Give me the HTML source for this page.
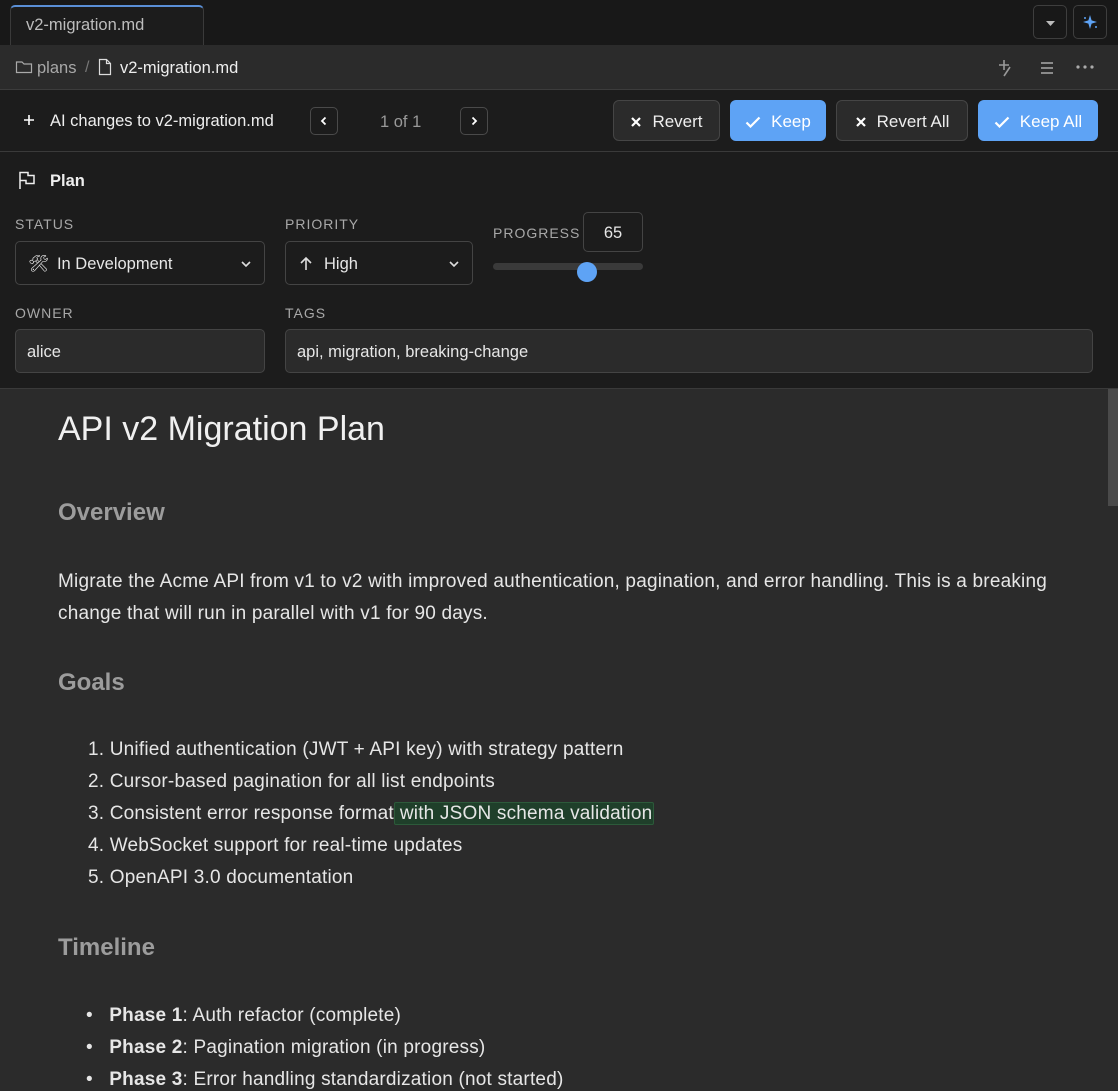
<!DOCTYPE html>
<html><head><meta charset="utf-8"><style>
*{box-sizing:border-box;margin:0;padding:0}
body{width:1118px;height:1080px;overflow:hidden;background:#2b2b2b;font-family:"Liberation Sans",sans-serif;color:#e6e6e6;position:relative}
.abs{position:absolute}
.tabbar{left:0;top:0;width:1118px;height:45px;background:#181818}
.tab{left:10px;top:5px;width:194px;height:40px;border:1px solid #3a3a3a;border-bottom:none;border-top:2px solid #5a8fd6;border-radius:5px 5px 0 0;background:#1c1c1c;color:#bdbdbd;font-size:16.5px;padding:9px 0 0 15px}
.sq{width:34px;height:34px;border:1px solid #3e3e3e;border-radius:5px;top:5px}
.crumb{left:0;top:45px;width:1118px;height:45px;background:#2b2b2b;border-bottom:1px solid #3c3c3c}
.aibar{left:0;top:90px;width:1118px;height:62px;background:#1c1c1c;border-bottom:1px solid #3a3a3a}
.btn{top:100px;height:41px;border-radius:6px;font-size:17px;display:flex;align-items:center;justify-content:center;gap:10px;padding-top:2px}
.dk{background:#2b2b2b;border:1px solid #454545;color:#eee}
.bl{background:#5ea3f5;color:#fff}
.nav{top:107px;width:28px;height:28px;border:1px solid #4a4a4a;border-radius:5px;display:flex;align-items:center;justify-content:center}
.plan{left:0;top:152px;width:1118px;height:237px;background:#1c1c1c;border-bottom:1px solid #3a3a3a}
.lbl{font-size:14px;color:#a8a8a8;letter-spacing:1px}
.fld{border:1px solid #444;border-radius:5px;background:#1c1c1c;font-size:16.5px;color:#e6e6e6;display:flex;align-items:center;padding:2px 12px 0}
.inp{background:#2b2b2b}
.doc{left:58px;color:#e6e6e6;font-size:19px;letter-spacing:0.2px}
h2{position:absolute;left:58px;font-size:24px;font-weight:bold;color:#9c9c9c}
.li{position:absolute;left:88px;font-size:19px;letter-spacing:0.2px}
</style></head><body>
<div class="abs tabbar"></div>
<div class="abs tab">v2-migration.md</div>
<div class="abs sq" style="left:1033px"><svg width="34" height="34"><path d="M12 15h9l-4.5 5z" fill="#bbb"/></svg></div>
<div class="abs sq" style="left:1073px"><svg width="34" height="34"><path d="M16 9l1.6 5.4 5.4 1.6-5.4 1.6L16 23l-1.6-5.4L9 16l5.4-1.6z" fill="#5ea3f5"/><circle cx="11" cy="12" r="1" fill="#5ea3f5"/><circle cx="22" cy="21" r="1" fill="#5ea3f5"/></svg></div>
<div class="abs crumb"></div>
<svg class="abs" style="left:15px;top:58px" width="18" height="18"><path d="M1.5 4.5v10h15v-8.5h-7.5l-2-2h-5.5z" fill="none" stroke="#aaa" stroke-width="1.2"/></svg>
<div class="abs" style="left:37px;top:59px;font-size:16.5px;color:#a8a8a8">plans</div>
<div class="abs" style="left:85px;top:59px;font-size:16px;color:#777">/</div>
<svg class="abs" style="left:97px;top:57px" width="16" height="20"><path d="M2.5 2.5h7l4 4v11h-11z M9.5 2.5v4h4" fill="none" stroke="#ddd" stroke-width="1.2"/></svg>
<div class="abs" style="left:120px;top:59px;font-size:16.5px;color:#eee">v2-migration.md</div>
<svg class="abs" style="left:995px;top:57px" width="22" height="22"><path d="M9 3v10M4 8h10M15 10l-6 9" stroke="#999" stroke-width="1.6"/></svg>
<svg class="abs" style="left:1038px;top:58px" width="20" height="20"><path d="M3 5h12M3 10h12M3 15h12" stroke="#aaa" stroke-width="1.5"/></svg>
<svg class="abs" style="left:1075px;top:62px" width="20" height="10"><circle cx="3" cy="5" r="1.6" fill="#aaa"/><circle cx="10" cy="5" r="1.6" fill="#aaa"/><circle cx="17" cy="5" r="1.6" fill="#aaa"/></svg>
<div class="abs aibar"></div>
<svg class="abs" style="left:22px;top:113px" width="14" height="14"><path d="M7 2v10M2 7h10" stroke="#fff" stroke-width="1.6"/></svg>
<div class="abs" style="left:50px;top:112px;font-size:16.5px;color:#eee">AI changes to v2-migration.md</div>
<div class="abs nav" style="left:310px"><svg width="12" height="12"><path d="M7.5 2.5L4 6l3.5 3.5" fill="none" stroke="#fff" stroke-width="1.8"/></svg></div>
<div class="abs" style="left:380px;top:113px;font-size:16.5px;color:#999">1 of 1</div>
<div class="abs nav" style="left:460px"><svg width="12" height="12"><path d="M4.5 2.5L8 6l-3.5 3.5" fill="none" stroke="#fff" stroke-width="1.8"/></svg></div>
<div class="abs btn dk" style="left:613px;width:107px"><svg width="12" height="12"><path d="M2 2l8 8M10 2l-8 8" stroke="#fff" stroke-width="2.2"/></svg>Revert</div>
<div class="abs btn bl" style="left:730px;width:96px"><svg width="16" height="12"><path d="M1.5 6.5l4 4 9-9" fill="none" stroke="#fff" stroke-width="2.2"/></svg>Keep</div>
<div class="abs btn dk" style="left:836px;width:132px"><svg width="12" height="12"><path d="M2 2l8 8M10 2l-8 8" stroke="#fff" stroke-width="2.2"/></svg>Revert All</div>
<div class="abs btn bl" style="left:978px;width:120px"><svg width="16" height="12"><path d="M1.5 6.5l4 4 9-9" fill="none" stroke="#fff" stroke-width="2.2"/></svg>Keep All</div>
<div class="abs plan"></div>
<svg class="abs" style="left:17px;top:170px" width="20" height="20"><path d="M3 19V2.5h8v3h6v8h-8v-3H3" fill="none" stroke="#eee" stroke-width="1.5"/></svg>
<div class="abs" style="left:50px;top:172px;font-size:16.5px;font-weight:bold;color:#eee">Plan</div>
<div class="abs lbl" style="left:15px;top:216px">STATUS</div>
<div class="abs lbl" style="left:285px;top:216px">PRIORITY</div>
<div class="abs lbl" style="left:493px;top:225px">PROGRESS</div>
<div class="abs fld" style="left:583px;top:212px;width:60px;height:40px;justify-content:center;padding:2px 0 0;border-color:#444">65</div>
<div class="abs" style="left:493px;top:263px;width:150px;height:7px;border-radius:4px;background:#3a3a3a"></div>
<div class="abs" style="left:577px;top:262px;width:20px;height:20px;border-radius:50%;background:#5ea3f5"></div>
<div class="abs fld" style="left:15px;top:241px;width:250px;height:44px"><span style="margin-right:8px">🛠</span>In Development<svg style="margin-left:auto" width="12" height="12"><path d="M2 4l4 4 4-4" fill="none" stroke="#ddd" stroke-width="1.6"/></svg></div>
<div class="abs fld" style="left:285px;top:241px;width:188px;height:44px"><svg width="16" height="16" style="margin-right:10px"><path d="M8 14V2M3 7l5-5 5 5" fill="none" stroke="#ddd" stroke-width="1.6"/></svg>High<svg style="margin-left:auto" width="12" height="12"><path d="M2 4l4 4 4-4" fill="none" stroke="#ddd" stroke-width="1.6"/></svg></div>
<div class="abs lbl" style="left:15px;top:305px">OWNER</div>
<div class="abs lbl" style="left:285px;top:305px">TAGS</div>
<div class="abs fld inp" style="left:15px;top:329px;width:250px;height:44px;padding-left:11px">alice</div>
<div class="abs fld inp" style="left:285px;top:329px;width:808px;height:44px;padding-left:11px">api, migration, breaking-change</div>
<div class="abs" style="left:1108px;top:389px;width:10px;height:117px;background:#4a4a4a"></div>
<div class="abs doc" style="top:410px;font-size:34px;color:#f0f0f0;letter-spacing:0">API v2 Migration Plan</div>
<h2 style="top:499px">Overview</h2>
<div class="abs doc" style="top:566px;width:1000px;line-height:32px">Migrate the Acme API from v1 to v2 with improved authentication, pagination, and error handling. This is a breaking change that will run in parallel with v1 for 90 days.</div>
<h2 style="top:669px">Goals</h2>
<div class="li" style="top:739px">1. Unified authentication (JWT + API key) with strategy pattern</div>
<div class="li" style="top:771px">2. Cursor-based pagination for all list endpoints</div>
<div class="li" style="top:803px">3. Consistent error response format<span style="background:#1f3f2a;border:1px solid #2c5a3a;border-radius:2px;padding:0 1px 0 5px">with JSON schema validation</span></div>
<div class="li" style="top:835px">4. WebSocket support for real-time updates</div>
<div class="li" style="top:867px">5. OpenAPI 3.0 documentation</div>
<h2 style="top:934px">Timeline</h2>
<div class="li" style="top:1005px;left:86px">•&nbsp;&nbsp;&nbsp;<b>Phase 1</b>: Auth refactor (complete)</div>
<div class="li" style="top:1037px;left:86px">•&nbsp;&nbsp;&nbsp;<b>Phase 2</b>: Pagination migration (in progress)</div>
<div class="li" style="top:1069px;left:86px">•&nbsp;&nbsp;&nbsp;<b>Phase 3</b>: Error handling standardization (not started)</div>
</body></html>
